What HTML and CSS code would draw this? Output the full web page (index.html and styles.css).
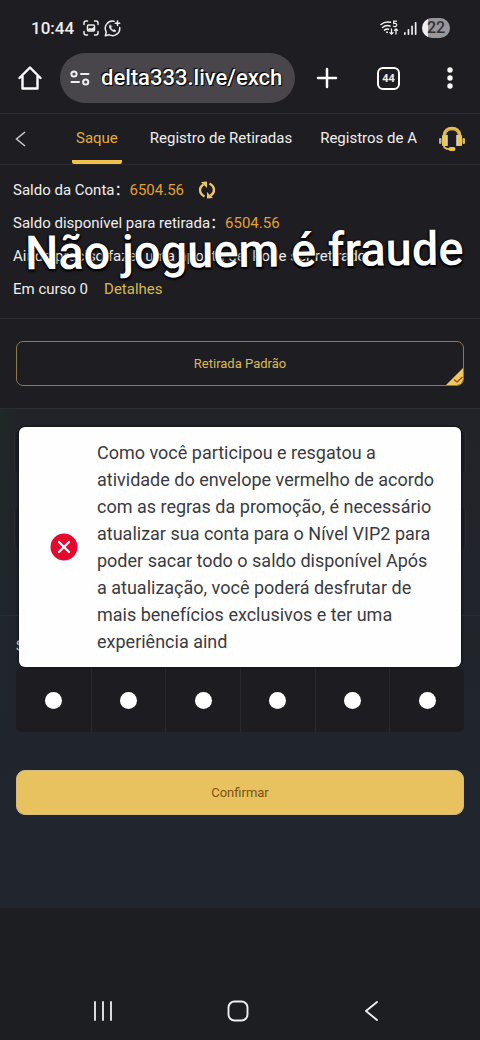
FILE: index.html
```html
<!DOCTYPE html>
<html lang="pt-BR">
<head>
<meta charset="utf-8">
<meta name="viewport" content="width=device-width, initial-scale=1">
<title>Saque</title>
<link rel="stylesheet" href="styles.css">
</head>
<body>
<div class="phone">
  <header class="status">
    <span class="time">10:44</span>
    <svg class="status-icon" width="16" height="16" viewBox="0 0 16 16" fill="none" stroke="#eee" stroke-width="1.5" stroke-linecap="round">
      <path d="M1 4.500V3a2 2 0 0 1 2-2h1.500M11.500 1H13a2 2 0 0 1 2 2v1.500M15 11.500V13a2 2 0 0 1-2 2h-1.500M4.500 15H3a2 2 0 0 1-2-2v-1.500"/>
      <rect x="4.500" y="5" width="7" height="6" rx="1"/><path d="M5 10.500V9l2-1 1.500.5L11 7v3.500z" fill="#eee" stroke="none"/>
    </svg>
    <svg class="status-icon" width="17" height="17" viewBox="0 0 17 17" fill="none" stroke="#eee" stroke-width="1.500" stroke-linecap="round" stroke-linejoin="round">
      <path d="M10 1.300A7.200 7.200 0 0 0 2.300 12L1.300 15.700l3.700-1A7.200 7.200 0 0 0 15.700 7.500"/>
      <path d="M6 5c-1.500 1.500 0 4 1.500 5.300S11 12.400 12 11l-1.700-1.500-1.200.8C8 9.700 7.300 8.900 6.800 7.800l.8-1z" fill="#eee" stroke-width=".6"/>
      <path d="M13.500 1v4.400M11.300 3.200h4.400"/>
    </svg>
    <span class="spacer"></span>
    <svg width="19" height="16" viewBox="0 0 19 16" fill="none" stroke="#eee" stroke-width="1.500" stroke-linecap="round">
      <path d="M1 4.500C3.500 2.300 7 1.500 10.500 2.300M2.500 7.500c2-1.700 4.700-2.300 7.500-1.500M4.500 10.200c1.200-1 2.600-1.300 4-.9"/>
      <circle cx="7" cy="12.300" r="1" fill="#eee" stroke="none"/>
      <path d="M16.500 1.200h-2.800v2.300c1.800-.6 3 .2 3 1.500s-1.700 2-3.200 1.200" stroke-width="1.300"/>
      <path d="M11.500 9v5M9.900 12.600l1.600 1.600 1.600-1.600M16 14V9M14.400 10.400L16 8.800l1.600 1.600" stroke-width="1.300"/>
    </svg>
    <svg width="13" height="14" viewBox="0 0 13 14" fill="#eee"><rect y="11" width="1.700" height="3" rx=".8"/><rect x="3.600" y="8" width="1.700" height="6" rx=".8"/><rect x="7.200" y="4.500" width="1.700" height="9.500" rx=".8"/><rect x="10.800" y="1" width="1.700" height="13" rx=".8"/></svg>
    <span class="battery">22</span>
  </header>

  <div class="browser">
    <button class="icon-button" aria-label="Início">
      <svg width="24" height="24" viewBox="0 0 24 24" fill="none" stroke="#fff" stroke-width="2.400" stroke-linejoin="round" stroke-linecap="round"><path d="M1.500 12L12 1.500 22.500 12M4.500 10v12.500h15V10"/></svg>
    </button>
    <div class="address">
      <svg width="20" height="16" viewBox="0 0 20 16" fill="none" stroke="#eee" stroke-width="2" stroke-linecap="round"><circle cx="4" cy="4" r="2.600"/><path d="M11 4h7.500M1.500 12H9"/><circle cx="15.700" cy="12" r="2.600"/></svg>
      <input class="url" type="text" aria-label="Endereço" value="delta333.live/exch">
    </div>
    <div class="actions">
      <button class="icon-button" aria-label="Nova aba">
        <svg width="22" height="22" viewBox="0 0 22 22" stroke="#fff" stroke-width="2.500" stroke-linecap="round"><path d="M11 2v18M2 11h18"/></svg>
      </button>
      <button class="tab-count" aria-label="44 abas">44</button>
      <button class="icon-button" aria-label="Mais">
        <svg width="6" height="22" viewBox="0 0 6 22" fill="#fff"><circle cx="3" cy="3" r="2.700"/><circle cx="3" cy="11" r="2.700"/><circle cx="3" cy="19" r="2.700"/></svg>
      </button>
    </div>
  </div>

  <nav class="tabs">
    <button class="back" aria-label="Voltar">
      <svg width="11" height="16" viewBox="0 0 11 16" fill="none" stroke="#ccc" stroke-width="1.500"><path d="M10 1L1.500 8 10 15"/></svg>
    </button>
    <div class="tab-list">
      <a class="tab active" href="#saque">Saque</a>
      <a class="tab" href="#retiradas">Registro de Retiradas</a>
      <a class="tab" href="#registros">Registros de A</a>
    </div>
    <button class="support" aria-label="Suporte">
      <svg width="28" height="26" viewBox="0 0 28 26" fill="none">
        <path d="M6 12V9.500C6 5 9.500 2 14 2s8 3 8 7.500V12" stroke="#e9bd4c" stroke-width="2.600"/>
        <path d="M7.800 11V9.800C7.800 6 10.500 3.800 14 3.800s6.200 2.200 6.200 6V11" stroke="#f7e3a6" stroke-width="1"/>
        <rect x="4" y="9" width="5" height="11" rx="1" fill="#efc44f"/><rect x="19" y="9" width="5" height="11" rx="1" fill="#efc44f"/>
        <path d="M9 9v11M19 9v11" stroke="#d4d4d4" stroke-width="1.500"/>
        <rect x="1" y="12" width="2.500" height="6" rx="1.200" fill="#b3b3b3"/><rect x="24.500" y="12" width="2.500" height="6" rx="1.200" fill="#e5ba4b"/>
        <path d="M6 20c0 2 2 3 6 3" stroke="#e9bd4c" stroke-width="1.800"/><rect x="10.500" y="21" width="7" height="4" rx="2" fill="#efc44f"/>
      </svg>
    </button>
  </nav>

  <main>
    <section class="balance">
      <p class="row"><span>Saldo da Conta：</span><span class="amount">6504.56</span><button class="refresh" aria-label="Atualizar">
          <svg width="18" height="18" viewBox="0 0 18 18" fill="none" stroke="#ecc766" stroke-width="2.400"><path d="M6.500 15.500C1 12.500.5 6.500 5.500 3.500"/><path d="M11.500 2.500c5.500 3 6 9 1 12"/><path d="M3 1l6-.5V7zM15 17l-6 .5V11z" fill="#ecc766" stroke="none"/></svg>
        </button></p>
      <p class="row"><span>Saldo disponível para retirada：</span><span class="amount">6504.56</span></p>
      <p class="row">Ainda preciso fazer uma aposta de&nbsp; Pode ser retirado</p>
      <p class="row">Em curso 0<a class="details" href="#detalhes">Detalhes</a></p>
      <p class="caption">Não joguem é fraude</p>
    </section>

    <section class="method">
      <button class="method-option">Retirada Padrão
        <svg class="check" width="17" height="17" viewBox="0 0 17 17"><path d="M17 0v17H0z" fill="#efc660"/><path d="M8 11.500l3 2.500 5.500-5" fill="none" stroke="#a5520d" stroke-width="1.500"/></svg>
      </button>
    </section>

    <form class="form">
      <div class="fields">
        <input class="field" type="text" aria-label="Conta">
        <input class="field" type="text" aria-label="Valor">
      </div>
      <div class="password">
        <span class="password-label" id="pin-label">Senha</span>
        <div class="pin" role="group" aria-labelledby="pin-label">
          <span class="cell"></span><span class="cell"></span><span class="cell"></span><span class="cell"></span><span class="cell"></span><span class="cell"></span>
        </div>
        <button class="confirm" type="button">Confirmar</button>
      </div>
      <div class="toast" role="alert">
        <svg class="toast-icon" width="28" height="28" viewBox="0 0 28 28"><circle cx="14" cy="14" r="13.500" fill="#e5092e"/><path d="M9 9l10 10M19 9L9 19" stroke="#fff" stroke-width="2.200" stroke-linecap="round"/></svg>
        <p class="toast-text">Como você participou e resgatou a atividade do envelope vermelho de acordo com as regras da promoção, é necessário atualizar sua conta para o Nível VIP2 para poder sacar todo o saldo disponível Após a atualização, você poderá desfrutar de mais benefícios exclusivos e ter uma experiência aind</p>
      </div>
    </form>
  </main>

  <footer class="navbar">
    <button class="icon-button" aria-label="Recentes"><svg width="20" height="20" viewBox="0 0 20 20" stroke="#eee" stroke-width="1.800" stroke-linecap="round"><path d="M2 1v18M10 1v18M18 1v18"/></svg></button>
    <button class="icon-button" aria-label="Tela inicial"><svg width="22" height="22" viewBox="0 0 22 22" fill="none" stroke="#eee" stroke-width="1.900"><rect x="1.500" y="1.500" width="19" height="19" rx="6"/></svg></button>
    <button class="icon-button" aria-label="Voltar"><svg width="20" height="20" viewBox="0 0 20 20" fill="none" stroke="#eee" stroke-width="1.900" stroke-linecap="round" stroke-linejoin="round"><path d="M15 1L4 10l11 9"/></svg></button>
  </footer>
</div>
</body>
</html>
```
FILE: styles.css
```css
* { box-sizing: border-box; }
body { margin: 0; background: #1d1e22; color: #eee; font: 15px/24px Roboto, "Noto Sans CJK SC", sans-serif; }
p { margin: 0; }
a { color: inherit; text-decoration: none; }
button { margin: 0; padding: 0; border: 0; background: none; color: inherit; font: inherit; }
svg { display: block; flex: none; }
.phone { display: flex; flex-direction: column; min-height: 100vh; overflow: hidden; background: #1e1d22; }
main { display: flex; flex: 1; flex-direction: column; }

.status { display: flex; align-items: center; gap: 5px; padding: 16px 30px 0 31px; }
.time { margin-right: 4px; font-size: 17px; font-weight: 500; }
.spacer { flex: 1; }
.battery { width: 28px; border-radius: 10px; background: linear-gradient(90deg, #eee 6px, #98979b 6px); color: #323136; font-size: 16px; font-weight: 500; line-height: 20px; text-align: center; }

.browser { display: flex; align-items: center; gap: 18px; padding: 13px 18px 10px; border-bottom: 1px solid #2c2d31; }
.icon-button { display: grid; flex: none; width: 24px; height: 24px; place-items: center; }
.address { display: flex; flex: 1; align-items: center; gap: 11px; min-width: 0; height: 50px; padding: 0 10px; border-radius: 25px; background: #48464b; }
.url { flex: 1; min-width: 0; padding: 0; border: 0; outline: 0; background: none; color: #fff; font: 500 22px/32px Roboto, sans-serif; text-shadow: 1px 1px 1px #000, -1px -1px 1px #000; }
.actions { display: flex; align-items: center; gap: 38px; margin-left: 2px; }
.tab-count { flex: none; width: 23px; height: 23px; border: 2px solid #fff; border-radius: 6px; font-size: 11px; font-weight: 700; line-height: 19px; }

.tabs { display: flex; align-items: center; height: 51px; padding: 0 14px 0 15px; border-bottom: 1px solid #2a2b2f; }
.back { padding: 4px 0; }
.tab-list { display: flex; flex: 1; align-self: stretch; gap: 28px; min-width: 0; margin: 0 12px 0 46px; overflow: hidden; white-space: nowrap; }
.tab { flex: none; line-height: 48px; }
.active { padding: 0 4px; border-bottom: 4px solid #efc14c; border-radius: 2px; color: #e1ad3f; }
.support { flex: none; }

.balance { position: relative; display: grid; gap: 9px; padding: 13px 13px 17px; border-bottom: 1px solid #2b2c30; }
.row { display: flex; align-items: center; height: 24px; white-space: nowrap; }
.amount { color: #e2a02f; }
.refresh { margin-left: 14px; }
.details { margin-left: 16px; color: #d5b953; }
.caption { position: absolute; top: 56px; left: 25px; color: #fff; font-size: 47px; font-weight: 500; line-height: 60px; white-space: nowrap; text-shadow: 0 0 2px #000, 1px 2px 2px #000, -1px 1px 2px #000; transform: rotate(-0.6deg); }

.method { padding: 22px 16px; border-bottom: 1px solid #2a2f32; }
.method-option { position: relative; display: block; width: 100%; height: 45px; overflow: hidden; border: 1px solid #8a7a4d; border-radius: 7px; color: #dcb957; font-size: 13px; }
.check { position: absolute; right: 0; bottom: 0; }

.form { position: relative; flex: 1; background: linear-gradient(#20222700, #20252e 80%), linear-gradient(90deg, #1f2827, #222328 16px); }
.fields { display: grid; gap: 30px; padding: 20px 14px 64px; border-bottom: 1px solid #2a2d31; }
.field { width: 100%; height: 46px; border: 1px solid #292b2f; border-radius: 6px; background: #1e1f24; }
.password { padding: 18px 16px 93px; }
.password-label { display: block; height: 34px; }
.pin { display: grid; grid-template-columns: repeat(6, 1fr); overflow: hidden; border-radius: 5px; background: #1d1c21; }
.cell { display: grid; height: 64px; place-items: center; border-left: 1px solid #28292d; }
.cell:first-child { border-left: 0; }
.cell::before { width: 17px; height: 17px; border-radius: 50%; background: #fff; content: ""; }
.confirm { display: block; width: 100%; height: 45px; margin-top: 38px; border: 1px solid #cfba86; border-radius: 9px; background: #e8c25f; color: #795210; font-size: 13px; }
.toast { position: absolute; top: 18px; right: 19px; left: 19px; display: flex; align-items: center; gap: 19px; padding: 12px 20px 12px 31px; border-radius: 6px; background: #fefeff; color: #3a3b41; box-shadow: 0 0 3px #000; }
.toast-text { flex: 1; font-size: 18px; line-height: 27px; }

.navbar { display: flex; justify-content: space-between; padding: 91px 96px 17px 91px; background: #1d1e22; }
```
